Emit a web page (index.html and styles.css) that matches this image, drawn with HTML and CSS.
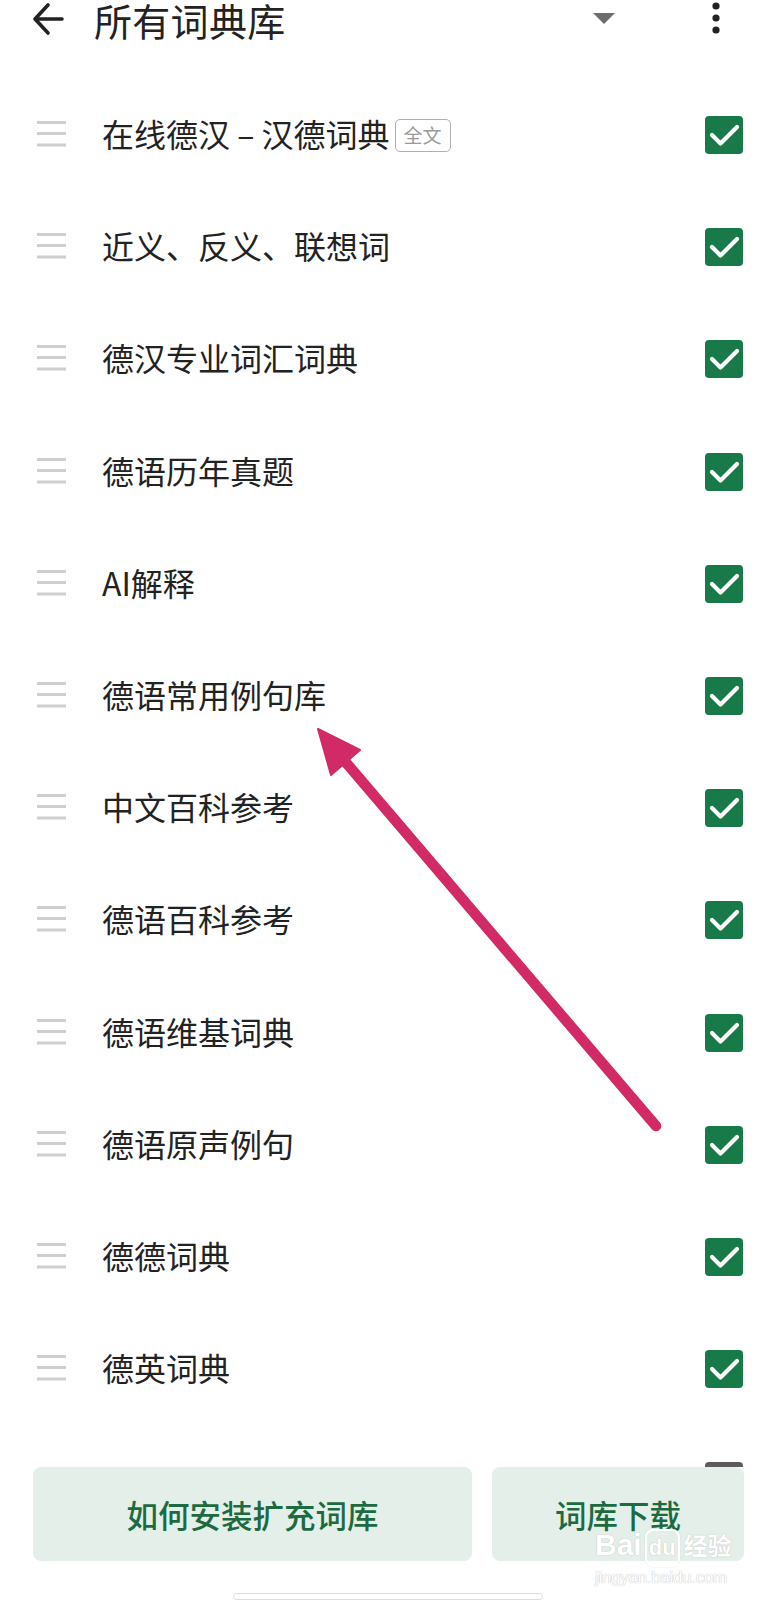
FILE: index.html
```html
<!DOCTYPE html>
<html lang="zh-CN">
<head>
<meta charset="utf-8">
<title>所有词典库</title>
<link rel="stylesheet" href="styles.css">
</head>
<body>
<div class="app">
  <header class="topbar">
    <svg class="back" width="32" height="36" viewBox="0 0 32 36"><path d="M30 18 H4 M16 4 L3 18 L16 32" fill="none" stroke="#222" stroke-width="3.6" stroke-linecap="round" stroke-linejoin="round"/></svg>
    <h1 class="title">所有词典库</h1>
    <div class="spacer"></div>
    <svg class="caret" width="22" height="12" viewBox="0 0 22 12"><polygon points="0,0 22,0 11,11" fill="#6d6d6d"/></svg>
    <svg class="kebab" width="8" height="34" viewBox="0 0 8 34"><circle cx="4" cy="4" r="3.6" fill="#222"/><circle cx="4" cy="16" r="3.6" fill="#222"/><circle cx="4" cy="28" r="3.6" fill="#222"/></svg>
  </header>

  <ul class="list">
    <li class="row"><svg class="handle" width="29" height="30" viewBox="0 0 29 30"><path d="M0 2.5H29M0 13.5H29M0 25H29" stroke="#cfcfcf" stroke-width="3"/></svg><span class="name">在线德汉 – 汉德词典</span><span class="badge">全文</span><span class="check"><svg width="38" height="38" viewBox="0 0 38 38"><polyline points="7,19 15.5,27.5 32,11" fill="none" stroke="#fff" stroke-width="4.2" stroke-linecap="round" stroke-linejoin="round"/></svg></span></li>
    <li class="row"><svg class="handle" width="29" height="30" viewBox="0 0 29 30"><path d="M0 2.5H29M0 13.5H29M0 25H29" stroke="#cfcfcf" stroke-width="3"/></svg><span class="name">近义、反义、联想词</span><span class="check"><svg width="38" height="38" viewBox="0 0 38 38"><polyline points="7,19 15.5,27.5 32,11" fill="none" stroke="#fff" stroke-width="4.2" stroke-linecap="round" stroke-linejoin="round"/></svg></span></li>
    <li class="row"><svg class="handle" width="29" height="30" viewBox="0 0 29 30"><path d="M0 2.5H29M0 13.5H29M0 25H29" stroke="#cfcfcf" stroke-width="3"/></svg><span class="name">德汉专业词汇词典</span><span class="check"><svg width="38" height="38" viewBox="0 0 38 38"><polyline points="7,19 15.5,27.5 32,11" fill="none" stroke="#fff" stroke-width="4.2" stroke-linecap="round" stroke-linejoin="round"/></svg></span></li>
    <li class="row"><svg class="handle" width="29" height="30" viewBox="0 0 29 30"><path d="M0 2.5H29M0 13.5H29M0 25H29" stroke="#cfcfcf" stroke-width="3"/></svg><span class="name">德语历年真题</span><span class="check"><svg width="38" height="38" viewBox="0 0 38 38"><polyline points="7,19 15.5,27.5 32,11" fill="none" stroke="#fff" stroke-width="4.2" stroke-linecap="round" stroke-linejoin="round"/></svg></span></li>
    <li class="row"><svg class="handle" width="29" height="30" viewBox="0 0 29 30"><path d="M0 2.5H29M0 13.5H29M0 25H29" stroke="#cfcfcf" stroke-width="3"/></svg><span class="name">AI解释</span><span class="check"><svg width="38" height="38" viewBox="0 0 38 38"><polyline points="7,19 15.5,27.5 32,11" fill="none" stroke="#fff" stroke-width="4.2" stroke-linecap="round" stroke-linejoin="round"/></svg></span></li>
    <li class="row"><svg class="handle" width="29" height="30" viewBox="0 0 29 30"><path d="M0 2.5H29M0 13.5H29M0 25H29" stroke="#cfcfcf" stroke-width="3"/></svg><span class="name">德语常用例句库</span><span class="check"><svg width="38" height="38" viewBox="0 0 38 38"><polyline points="7,19 15.5,27.5 32,11" fill="none" stroke="#fff" stroke-width="4.2" stroke-linecap="round" stroke-linejoin="round"/></svg></span></li>
    <li class="row"><svg class="handle" width="29" height="30" viewBox="0 0 29 30"><path d="M0 2.5H29M0 13.5H29M0 25H29" stroke="#cfcfcf" stroke-width="3"/></svg><span class="name">中文百科参考</span><span class="check"><svg width="38" height="38" viewBox="0 0 38 38"><polyline points="7,19 15.5,27.5 32,11" fill="none" stroke="#fff" stroke-width="4.2" stroke-linecap="round" stroke-linejoin="round"/></svg></span></li>
    <li class="row"><svg class="handle" width="29" height="30" viewBox="0 0 29 30"><path d="M0 2.5H29M0 13.5H29M0 25H29" stroke="#cfcfcf" stroke-width="3"/></svg><span class="name">德语百科参考</span><span class="check"><svg width="38" height="38" viewBox="0 0 38 38"><polyline points="7,19 15.5,27.5 32,11" fill="none" stroke="#fff" stroke-width="4.2" stroke-linecap="round" stroke-linejoin="round"/></svg></span></li>
    <li class="row"><svg class="handle" width="29" height="30" viewBox="0 0 29 30"><path d="M0 2.5H29M0 13.5H29M0 25H29" stroke="#cfcfcf" stroke-width="3"/></svg><span class="name">德语维基词典</span><span class="check"><svg width="38" height="38" viewBox="0 0 38 38"><polyline points="7,19 15.5,27.5 32,11" fill="none" stroke="#fff" stroke-width="4.2" stroke-linecap="round" stroke-linejoin="round"/></svg></span></li>
    <li class="row"><svg class="handle" width="29" height="30" viewBox="0 0 29 30"><path d="M0 2.5H29M0 13.5H29M0 25H29" stroke="#cfcfcf" stroke-width="3"/></svg><span class="name">德语原声例句</span><span class="check"><svg width="38" height="38" viewBox="0 0 38 38"><polyline points="7,19 15.5,27.5 32,11" fill="none" stroke="#fff" stroke-width="4.2" stroke-linecap="round" stroke-linejoin="round"/></svg></span></li>
    <li class="row"><svg class="handle" width="29" height="30" viewBox="0 0 29 30"><path d="M0 2.5H29M0 13.5H29M0 25H29" stroke="#cfcfcf" stroke-width="3"/></svg><span class="name">德德词典</span><span class="check"><svg width="38" height="38" viewBox="0 0 38 38"><polyline points="7,19 15.5,27.5 32,11" fill="none" stroke="#fff" stroke-width="4.2" stroke-linecap="round" stroke-linejoin="round"/></svg></span></li>
    <li class="row"><svg class="handle" width="29" height="30" viewBox="0 0 29 30"><path d="M0 2.5H29M0 13.5H29M0 25H29" stroke="#cfcfcf" stroke-width="3"/></svg><span class="name">德英词典</span><span class="check"><svg width="38" height="38" viewBox="0 0 38 38"><polyline points="7,19 15.5,27.5 32,11" fill="none" stroke="#fff" stroke-width="4.2" stroke-linecap="round" stroke-linejoin="round"/></svg></span></li>
    <li class="row"><span class="check check-off"></span></li>
  </ul>

  <div class="bottom-bar">
    <div class="buttons">
      <button class="btn btn-wide">如何安装扩充词库</button>
      <button class="btn btn-narrow">词库下载</button>
    </div>
    <div class="home-indicator"></div>
  </div>

  <svg class="annotation" width="776" height="1600" viewBox="0 0 776 1600">
    <line x1="656" y1="1126" x2="343" y2="759" stroke="#d12a67" stroke-width="10.5" stroke-linecap="round"/>
    <polygon points="318,729 360,750 331,775" fill="#d12a67" stroke="#d12a67" stroke-width="2" stroke-linejoin="round"/>
  </svg>

  <div class="watermark">
    <div class="wm-logo"><span>Bai</span><span class="wm-du">du</span><span class="wm-cn">经验</span></div>
    <div class="wm-url">jingyan.baidu.com</div>
  </div>
</div>
</body>
</html>
```

FILE: styles.css
```css
html, body {
  margin: 0;
  padding: 0;
  background: #fff;
}

body {
  width: 776px;
  height: 1600px;
  overflow: hidden;
  font-family: "Noto Sans CJK SC", "Noto Sans", sans-serif;
  color: #222;
}

.app {
  position: relative;
  width: 776px;
  height: 1600px;
}

.topbar {
  height: 80px;
  display: flex;
  align-items: flex-start;
  padding: 0 56px 0 32px;
  box-sizing: border-box;
}

.back {
  margin-top: 1px;
  flex: none;
}

.title {
  margin: 0 0 0 30px;
  font-size: 38px;
  font-weight: 400;
  line-height: 40px;
  color: #222;
  letter-spacing: 0.3px;
}

.spacer {
  flex: 1;
}

.caret {
  margin-top: 13px;
  flex: none;
}

.kebab {
  margin-left: 97px;
  margin-top: 2px;
  flex: none;
}

.list {
  list-style: none;
  margin: 0;
  padding: 0;
}

.row {
  height: 112.2px;
  display: flex;
  align-items: center;
  padding: 0 33px 0 37px;
  box-sizing: border-box;
}

.handle {
  flex: none;
  margin-top: -2px;
}

.name {
  margin-left: 36px;
  padding-bottom: 6px;
  font-size: 32px;
  line-height: 40px;
  color: #222;
  white-space: nowrap;
}

.badge {
  margin-left: 5px;
  margin-bottom: 2px;
  height: 33px;
  padding: 0 8px;
  border: 1.5px solid #b0b0b0;
  border-radius: 5px;
  box-sizing: border-box;
  font-size: 19px;
  line-height: 30px;
  color: #9a9a9a;
}

.check {
  margin-left: auto;
  margin-bottom: 2px;
  width: 38px;
  height: 38px;
  border-radius: 4px;
  background: #187a49;
  flex: none;
  display: flex;
}

.check-off {
  background: #5c5c5c;
}

.bottom-bar {
  position: absolute;
  left: 0;
  right: 0;
  top: 1467px;
  bottom: 0;
  background: #fff;
  display: flex;
  flex-direction: column;
}

.buttons {
  display: flex;
  gap: 20px;
  padding: 0 32px 0 33px;
}

.btn {
  height: 94px;
  border: none;
  border-radius: 8px;
  background: #e4efe9;
  color: #1c6b40;
  font-family: "Noto Sans CJK SC", "Noto Sans", sans-serif;
  font-size: 31.5px;
  font-weight: 500;
  padding: 0;
  margin: 0;
}

.btn-wide {
  width: 439px;
}

.btn-narrow {
  width: 252px;
}

.home-indicator {
  margin: 32px auto 0;
  width: 310px;
  height: 14px;
  border: 1.5px solid #dcdcdc;
  border-radius: 7px;
  box-sizing: border-box;
  background: #fff;
}

.annotation {
  position: absolute;
  left: 0;
  top: 0;
  pointer-events: none;
}

.watermark {
  position: absolute;
  left: 595px;
  top: 1528px;
  color: #fff;
  font-family: "Liberation Sans", Arial, sans-serif;
  text-shadow: 0 0 1px #c4c4c4, 0 0 1px #c4c4c4;
  pointer-events: none;
}

.wm-logo {
  display: flex;
  align-items: baseline;
  font-size: 30px;
  font-weight: 700;
  line-height: 34px;
}

.wm-du {
  margin-left: 3px;
  font-size: 22px;
  border: 2px solid #fff;
  border-radius: 8px;
  padding: 0 2px;
  box-shadow: 0 0 1px #c4c4c4;
}

.wm-cn {
  margin-left: 4px;
  font-family: "Noto Sans CJK SC", sans-serif;
  font-size: 24px;
}

.wm-url {
  font-size: 17px;
  line-height: 22px;
  letter-spacing: -0.3px;
}
```
